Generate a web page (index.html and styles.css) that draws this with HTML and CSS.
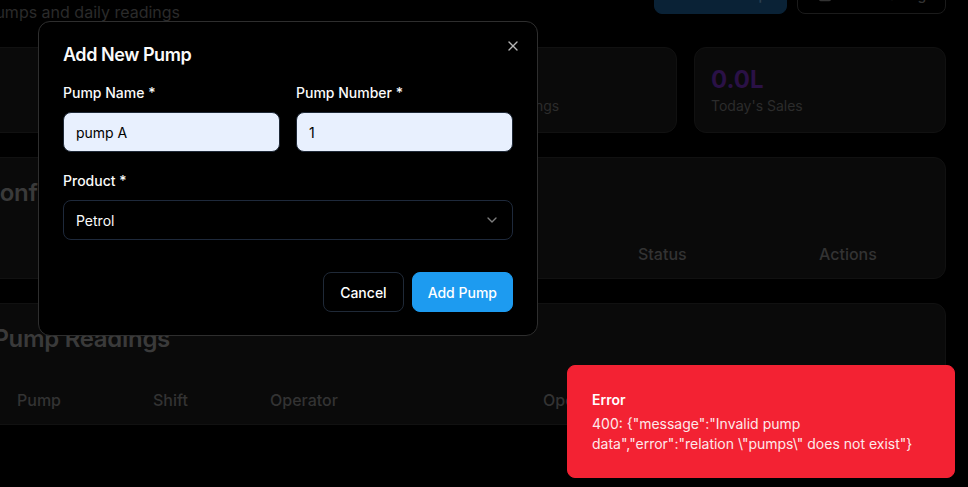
FILE: index.html
```html
<!DOCTYPE html>
<html lang="en">
<head>
<meta charset="utf-8">
<title>Pumps</title>
<link rel="stylesheet" href="styles.css">
</head>
<body>
<div class="viewport">
  <main class="main">
    <header class="page-header">
      <div class="page-heading">
        <h1 class="page-title">Pump Management</h1>
        <p class="page-subtitle">Manage fuel pumps and daily readings</p>
      </div>
      <div class="header-actions">
        <button class="bg-btn bg-btn-primary">
          <svg width="16" height="16" viewBox="0 0 24 24" fill="none" stroke="currentColor" stroke-width="2" stroke-linecap="round"><path d="M5 12h14"/><path d="M12 5v14"/></svg>
          Add Pump
        </button>
        <button class="bg-btn bg-btn-outline">
          <svg width="16" height="16" viewBox="0 0 24 24" fill="none" stroke="currentColor" stroke-width="2" stroke-linecap="round" stroke-linejoin="round"><rect x="8" y="2" width="8" height="4" rx="1"/><path d="M16 4h2a2 2 0 0 1 2 2v14a2 2 0 0 1-2 2H6a2 2 0 0 1-2-2V6a2 2 0 0 1 2-2h2"/></svg>
          Add Reading
        </button>
      </div>
    </header>

    <section class="stats">
      <div class="stat-card"><div class="stat-value">0</div><div class="stat-label">Total Pumps</div></div>
      <div class="stat-card"><div class="stat-value">0</div><div class="stat-label">Active Pumps</div></div>
      <div class="stat-card"><div class="stat-value">0</div><div class="stat-label">Today's Readings</div></div>
      <div class="stat-card"><div class="stat-value stat-value-purple">0.0L</div><div class="stat-label">Today's Sales</div></div>
    </section>

    <section class="panel">
      <h2 class="panel-title">Pump Configuration</h2>
      <div class="table-head cols-config">
        <span>Pump</span><span>Name</span><span>Product</span><span>Status</span><span>Actions</span>
      </div>
    </section>

    <section class="panel">
      <h2 class="panel-title panel-title-readings">Latest Pump Readings</h2>
      <div class="table-head cols-readings">
        <span>Date</span><span>Pump</span><span>Shift</span><span>Operator</span><span>Opening</span><span>Closing</span><span>Sales</span>
      </div>
    </section>
  </main>

  <div class="modal" role="dialog">
    <h3 class="modal-title">Add New Pump</h3>
    <button class="modal-close" aria-label="Close">
      <svg width="16" height="16" viewBox="0 0 24 24" fill="none" stroke="currentColor" stroke-width="2" stroke-linecap="round" stroke-linejoin="round"><path d="M18 6 6 18"/><path d="m6 6 12 12"/></svg>
    </button>
    <div class="form-row">
      <div class="field">
        <label class="field-label">Pump Name *</label>
        <div class="input">pump A</div>
      </div>
      <div class="field">
        <label class="field-label">Pump Number *</label>
        <div class="input">1</div>
      </div>
    </div>
    <div class="field field-full">
      <label class="field-label">Product *</label>
      <div class="select">
        <span>Petrol</span>
        <svg class="chevron" width="16" height="16" viewBox="0 0 24 24" fill="none" stroke="currentColor" stroke-width="2" stroke-linecap="round" stroke-linejoin="round"><path d="m6 9 6 6 6-6"/></svg>
      </div>
    </div>
    <div class="modal-footer">
      <button class="btn btn-outline">Cancel</button>
      <button class="btn btn-primary">Add Pump</button>
    </div>
  </div>

  <div class="toast" role="alert">
    <div class="toast-title">Error</div>
    <div class="toast-desc">400: {"message":"Invalid pump data","error":"relation \"pumps\" does not exist"}</div>
  </div>
</div>
</body>
</html>
```

FILE: styles.css
```css
* { box-sizing: border-box; }

body {
  margin: 0;
  background: #000;
  font-family: Inter, "Noto Sans", sans-serif;
}

.viewport {
  position: relative;
  width: 968px;
  height: 487px;
  overflow: hidden;
  background: #000;
}

/* ---------- dimmed background page ---------- */
.main {
  width: 1059px;
  margin: -36px 0 0 -113px;
}

.page-header {
  display: flex;
  justify-content: space-between;
  align-items: center;
  margin-bottom: 23px;
}

.page-title {
  margin: 0;
  font-size: 30px;
  line-height: 36px;
  font-weight: 700;
  color: #3a3a3a;
}

.page-subtitle {
  margin: 0;
  font-size: 16px;
  line-height: 24px;
  color: #2b2b2b;
}

.header-actions {
  display: flex;
  gap: 10px;
}

.bg-btn {
  height: 40px;
  border-radius: 8px;
  display: inline-flex;
  align-items: center;
  justify-content: center;
  gap: 8px;
  font-family: inherit;
  font-size: 14px;
  font-weight: 500;
  white-space: nowrap;
  padding: 0 16px;
}

.bg-btn-primary {
  width: 133px;
  background: #0a2236;
  border: 1px solid #0a2236;
  color: #2a4052;
}

.bg-btn-outline {
  width: 149px;
  background: #000;
  border: 1px solid #1b1b1b;
  color: #333;
}

.stats {
  display: grid;
  grid-template-columns: repeat(4, 1fr);
  gap: 17px;
  margin-bottom: 24px;
}

.stat-card {
  background: #0a0a0a;
  border: 1px solid #111;
  border-radius: 12px;
  padding: 16px;
}

.stat-value {
  font-size: 24px;
  line-height: 32px;
  font-weight: 700;
  color: #363636;
}

.stat-value-purple { color: #2a1146; }

.stat-label {
  font-size: 14px;
  line-height: 20px;
  color: #2c2c2c;
}

.panel {
  background: #0a0a0a;
  border: 1px solid #111;
  border-radius: 12px;
  padding: 19px 23px 0;
  margin-bottom: 24px;
}

.panel-title {
  margin: 0 0 21px;
  font-size: 24px;
  line-height: 32px;
  font-weight: 600;
  letter-spacing: -0.3px;
  color: #3a3a3a;
}

.panel-title-readings { padding-left: 7px; }

.table-head {
  display: grid;
  height: 48px;
  align-items: center;
  font-size: 16px;
  line-height: 24px;
  font-weight: 500;
  color: #333;
}

.cols-config { grid-template-columns: 240px 240px 247px 181px 1fr; }
.cols-readings { grid-template-columns: 106px 136px 117px 273px 130px 130px 1fr; }

/* ---------- modal ---------- */
.modal {
  position: absolute;
  left: 38px;
  top: 21px;
  width: 500px;
  background: #000;
  border: 1px solid #2e2e2e;
  border-radius: 12px;
  padding: 24px 24px 23px;
  color: #fafafa;
}

.modal-title {
  margin: 0 0 19px;
  font-size: 18px;
  line-height: 18px;
  font-weight: 600;
  letter-spacing: -0.45px;
  color: #fafafa;
}

.modal-close {
  position: absolute;
  top: 16px;
  right: 16px;
  width: 16px;
  height: 16px;
  padding: 0;
  border: 0;
  background: transparent;
  color: #b5b5b5;
  display: flex;
}

.form-row {
  display: grid;
  grid-template-columns: 1fr 1fr;
  gap: 16px;
  margin-bottom: 19px;
}

.field { display: flex; flex-direction: column; }

.field-label {
  font-size: 14px;
  line-height: 20px;
  font-weight: 500;
  color: #fafafa;
  margin-bottom: 9px;
}

.input {
  height: 40px;
  background: #e8f0fe;
  border: 1px solid #1f2937;
  border-radius: 8px;
  padding: 0 12px;
  display: flex;
  align-items: center;
  font-size: 14px;
  color: #000;
}

.select {
  height: 40px;
  background: #000;
  border: 1px solid #1e293b;
  border-radius: 8px;
  padding: 0 12px;
  display: flex;
  align-items: center;
  justify-content: space-between;
  font-size: 14px;
  color: #fafafa;
}

.chevron { opacity: 0.5; }

.modal-footer {
  display: flex;
  justify-content: flex-end;
  gap: 8px;
  margin-top: 32px;
}

.btn {
  height: 40px;
  padding: 0 16px;
  border-radius: 8px;
  font-family: inherit;
  font-size: 14px;
  font-weight: 500;
  color: #fff;
}

.btn-outline {
  background: #000;
  border: 1px solid #1f2937;
}

.btn-primary {
  padding: 0 15px;
  background: #1d9bf0;
  border: 1px solid #1d9bf0;
}

/* ---------- toast ---------- */
.toast {
  position: absolute;
  right: 13px;
  bottom: 9px;
  width: 388px;
  background: #f32233;
  border: 1px solid #f32233;
  border-radius: 8px;
  padding: 24px 32px 23px 24px;
  color: #fff;
}

.toast-title {
  font-size: 14px;
  line-height: 20px;
  font-weight: 600;
}

.toast-desc {
  margin-top: 4px;
  font-size: 14px;
  line-height: 20px;
  opacity: 0.9;
}
```
